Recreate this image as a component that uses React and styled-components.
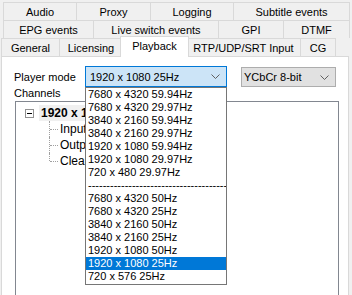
import styled, { createGlobalStyle } from "styled-components";

const Global = createGlobalStyle`
  html, body {
    margin: 0;
    padding: 0;
    background: #f0f0f0;
    overflow: hidden;
  }
  body {
    font-family: "Liberation Sans", Arial, sans-serif;
    font-size: 11px;
    color: #000;
  }
`;

const Window = styled.div`
  width: 352px;
  height: 295px;
  padding-top: 2px;
  box-sizing: border-box;
  overflow: hidden;
`;

const TabRow = styled.div`
  display: flex;
  align-items: flex-start;
  height: 18px;
  padding-left: ${(p) => p.$indent}px;
`;

const Tab = styled.div`
  flex: none;
  width: ${(p) => p.$w}px;
  height: 18px;
  box-sizing: border-box;
  margin-left: -1px;
  border: 1px solid #d9d9d9;
  border-bottom: none;
  background: #f0f0f0;
  display: flex;
  align-items: center;
  justify-content: center;
  white-space: nowrap;
  &:first-child {
    margin-left: 0;
  }
`;

const ActiveTab = styled(Tab)`
  position: relative;
  z-index: 2;
  width: ${(p) => p.$w + 4}px;
  height: 21px;
  margin-top: -2px;
  margin-left: -3px;
  margin-right: -2px;
  background: #fff;
  padding-bottom: 3px;
`;

const Panel = styled.div`
  margin-left: 1px;
  width: 348px;
  height: 260px;
  box-sizing: border-box;
  border: 1px solid #d9d9d9;
  border-bottom: none;
  background: #fff;
  padding: 9px 0 0 12px;
`;

const ModeRow = styled.div`
  display: flex;
  align-items: center;
  height: 21px;
`;

const Label = styled.span`
  width: 71px;
  flex: none;
`;

const ComboWrap = styled.div`
  position: relative;
  width: 142px;
  height: 21px;
`;

const Combo = styled.div`
  box-sizing: border-box;
  display: flex;
  align-items: center;
  justify-content: space-between;
  width: ${(p) => p.$w}px;
  height: ${(p) => (p.$focus ? 21 : 20)}px;
  margin-top: ${(p) => (p.$focus ? 0 : 1)}px;
  margin-left: ${(p) => p.$gap || 0}px;
  padding: 0 6px 0 ${(p) => (p.$focus ? 4 : 2)}px;
  border: 1px solid ${(p) => (p.$focus ? "#0078d7" : "#adadad")};
  background: ${(p) => (p.$focus ? "#cce4f7" : "#e1e1e1")};
  white-space: nowrap;
`;

const Chevron = () => (
  <svg width="9" height="5" viewBox="0 0 9 5">
    <path d="M0.5 0.5 L4.5 4.5 L8.5 0.5" fill="none" stroke="#606060" strokeWidth="1" />
  </svg>
);

const DropList = styled.div`
  position: absolute;
  z-index: 5;
  top: 21px;
  left: 0;
  width: 142px;
  box-sizing: border-box;
  border: 1px solid #767676;
  background: #fff;
  padding: 0 0 1px;
  overflow: hidden;
`;

const Item = styled.div`
  height: 13px;
  line-height: 13px;
  padding-left: 2px;
  white-space: nowrap;
  overflow: hidden;
  background: ${(p) => (p.$sel ? "#0078d7" : "transparent")};
  color: ${(p) => (p.$sel ? "#fff" : "#000")};
`;

const ChannelsLabel = styled.div`
  height: 13px;
  line-height: 13px;
`;

const TreeBox = styled.div`
  margin: 1px 0 0 1px;
  width: 324px;
  height: 200px;
  box-sizing: border-box;
  border: 1px solid #828790;
  padding: 3px 0 0 9px;
`;

const RootRow = styled.div`
  display: flex;
  align-items: center;
  height: 16px;
`;

const Expander = styled.div`
  width: 9px;
  height: 9px;
  box-sizing: border-box;
  border: 1px solid #919191;
  display: flex;
  align-items: center;
  justify-content: center;
  &::after {
    content: "";
    width: 5px;
    height: 1px;
    background: #000;
  }
`;

const RootText = styled.span`
  margin-left: 5px;
  padding: 0 2px;
  line-height: 16px;
  font-weight: bold;
  font-size: 12px;
  background: #f0f0f0;
  white-space: nowrap;
`;

const ChildList = styled.div`
  margin-left: 24px;
`;

const Child = styled.div`
  position: relative;
  height: 16px;
  line-height: 16px;
  padding-left: 11px;
  font-size: 12px;
  &::before {
    content: "";
    position: absolute;
    left: 0;
    top: 0;
    height: ${(p) => (p.$last ? 8 : 16)}px;
    border-left: 1px dotted #a0a0a0;
  }
  &::after {
    content: "";
    position: absolute;
    left: 1px;
    top: 8px;
    width: 8px;
    border-top: 1px dotted #a0a0a0;
  }
`;

const tabRows = [
  { indent: 3, tabs: [["Audio", 74], ["Proxy", 75], ["Logging", 84], ["Subtitle events", 117]] },
  { indent: 3, tabs: [["EPG events", 91], ["Live switch events", 126], ["GPI", 66], ["DTMF", 67]] },
  { indent: 1, tabs: [["General", 59], ["Licensing", 64], ["Playback", 65, true], ["RTP/UDP/SRT Input", 115], ["CG", 36]] },
];

const modes = [
  "7680 x 4320 59.94Hz",
  "7680 x 4320 29.97Hz",
  "3840 x 2160 59.94Hz",
  "3840 x 2160 29.97Hz",
  "1920 x 1080 59.94Hz",
  "1920 x 1080 29.97Hz",
  "720 x 480 29.97Hz",
  "-----------------------------------------------",
  "7680 x 4320 50Hz",
  "7680 x 4320 25Hz",
  "3840 x 2160 50Hz",
  "3840 x 2160 25Hz",
  "1920 x 1080 50Hz",
  "1920 x 1080 25Hz",
  "720 x 576 25Hz",
];

const selected = 13;

export default function App() {
  return (
    <Window>
      <Global />
      {tabRows.map((row, i) => (
        <TabRow key={i} $indent={row.indent}>
          {row.tabs.map(([name, w, active]) =>
            active ? (
              <ActiveTab key={name} $w={w}>{name}</ActiveTab>
            ) : (
              <Tab key={name} $w={w}>{name}</Tab>
            )
          )}
        </TabRow>
      ))}
      <Panel>
        <ModeRow>
          <Label>Player mode</Label>
          <ComboWrap>
            <Combo $w={142} $focus>
              <span>1920 x 1080 25Hz</span>
              <Chevron />
            </Combo>
            <DropList>
              {modes.map((m, i) => (
                <Item key={i} $sel={i === selected}>{m}</Item>
              ))}
            </DropList>
          </ComboWrap>
          <Combo $w={95} $gap={14}>
            <span>YCbCr 8-bit</span>
            <Chevron />
          </Combo>
        </ModeRow>
        <ChannelsLabel>Channels</ChannelsLabel>
        <TreeBox>
          <RootRow>
            <Expander />
            <RootText>1920 x 1080 25Hz</RootText>
          </RootRow>
          <ChildList>
            <Child>Input</Child>
            <Child>Output</Child>
            <Child $last>Clean</Child>
          </ChildList>
        </TreeBox>
      </Panel>
    </Window>
  );
}
